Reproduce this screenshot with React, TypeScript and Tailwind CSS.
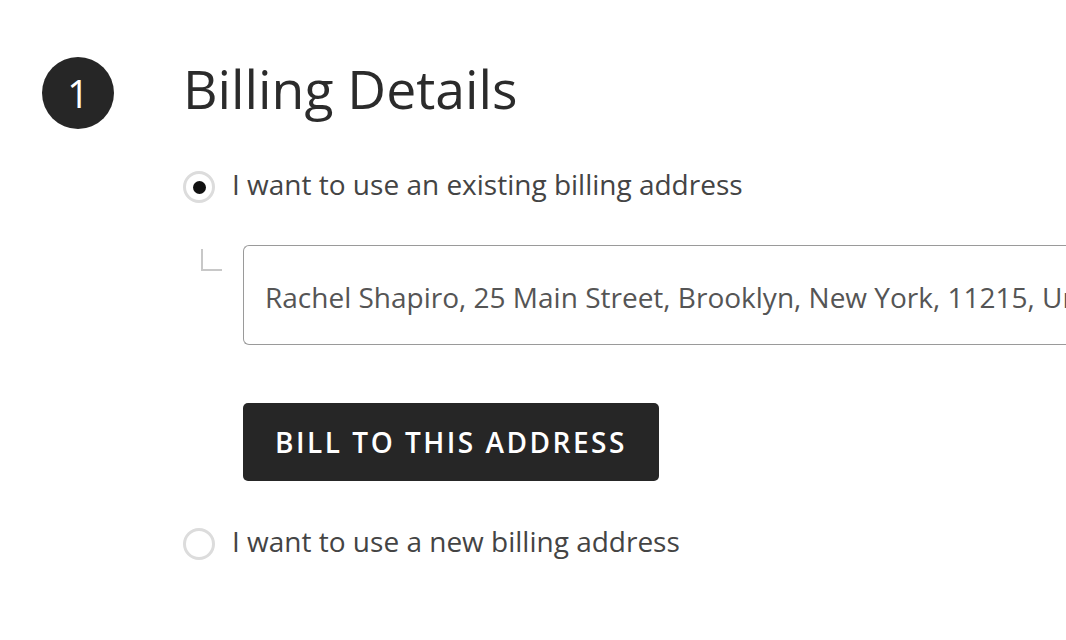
import React from "react";

export default function App() {
  return (
    <div
      className="w-[1066px] h-[640px] bg-white overflow-hidden text-[#333]"
      style={{ fontFamily: '"Open Sans", sans-serif' }}
    >
      <div className="flex items-center pt-[57px] pl-[42px]">
        <div className="w-[72px] h-[72px] rounded-full bg-[#262626] flex items-center justify-center text-white text-[38px] leading-none">
          1
        </div>
        <h1 className="ml-[69px] text-[53.5px] leading-none text-[#2b2b2b] -mt-[8px]">Billing Details</h1>
      </div>

      <div className="pl-[183px] mt-[42px]">
        <label className="flex items-center h-[32px]">
          <span className="w-[32px] h-[32px] rounded-full border-[3px] border-[#dcdcdc] bg-white flex items-center justify-center">
            <span className="w-[13px] h-[13px] rounded-full bg-[#111]" />
          </span>
          <span className="ml-[17px] text-[28px] leading-[32px] text-[#444] -mt-[6px]">I want to use an existing billing address</span>
        </label>

        <div className="flex mt-[42px]">
          <div className="w-[60px] pl-[18px] pt-[4px]">
            <div className="w-[21px] h-[22px] border-l-2 border-b-2 border-[#c8c8c8]" />
          </div>
          <div className="flex-1 min-w-0 h-[100px] border border-[#9a9a9a] rounded-l-[6px] border-r-0 flex items-center pl-[21px] pt-[4px] overflow-hidden whitespace-nowrap">
            <span className="text-[28px] leading-none text-[#555]">Rachel Shapiro, 25 Main Street, Brooklyn, New York, 11215, United States</span>
          </div>
        </div>

        <button className="ml-[60px] mt-[58px] w-[416px] h-[78px] rounded-[5px] bg-[#262626] text-white text-[28px] leading-none tracking-[2.5px] font-semibold">
          BILL TO THIS ADDRESS
        </button>

        <label className="flex items-center h-[32px] mt-[47px]">
          <span className="w-[32px] h-[32px] rounded-full border-[3px] border-[#dcdcdc] bg-white" />
          <span className="ml-[17px] text-[28px] leading-[32px] text-[#444] -mt-[6px]">I want to use a new billing address</span>
        </label>
      </div>
    </div>
  );
}
